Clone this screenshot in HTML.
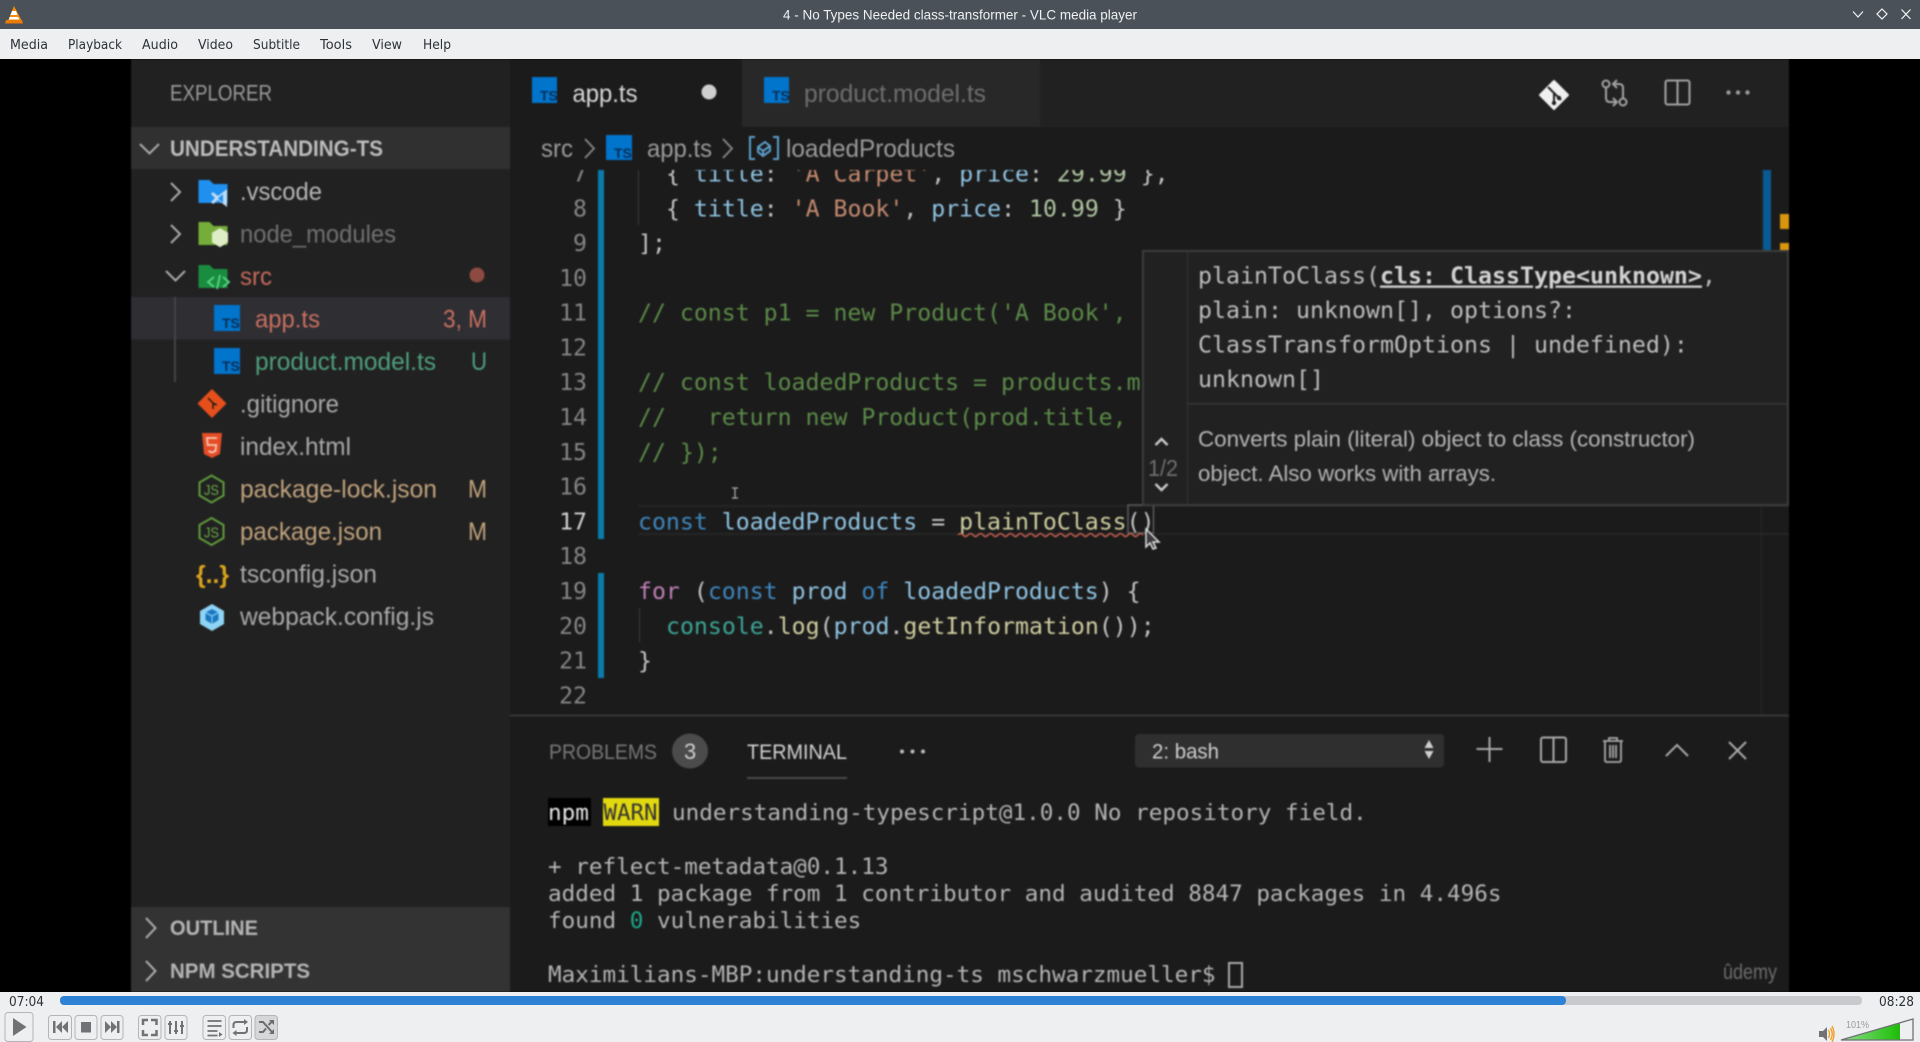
<!DOCTYPE html>
<html><head><meta charset="utf-8"><title>VLC media player</title>
<style>
html,body{margin:0;padding:0;background:#000;width:1920px;height:1042px;overflow:hidden}
svg{display:block}
text{white-space:pre}
.s{font-family:"Liberation Sans",sans-serif}
.ui{font-family:"DejaVu Sans","Liberation Sans",sans-serif;font-size:13px;fill:#2c3239}
.m{font-family:"DejaVu Sans Mono","Liberation Mono",monospace;font-size:23.2px;fill:#c4c4c4}
.t{font-family:"DejaVu Sans Mono","Liberation Mono",monospace;font-size:22.64px;fill:#b4b4b4}
.f{font-family:"Liberation Sans",sans-serif;font-size:25px}
.n{text-anchor:end;fill:#858585}
.c{fill:#5b8a48}.k{fill:#3f86bd}.v{fill:#8fc3e2}.y{fill:#cfcd9f}.r{fill:#c58a70}.g{fill:#b0c6a2}.p{fill:#bd7fb6}.q{fill:#3ba595}
.b{fill:#eeeff1;stroke:#b4b5b8;stroke-width:1}
</style></head><body>
<svg xmlns="http://www.w3.org/2000/svg" width="1920" height="1042" viewBox="0 0 1920 1042">
<defs><clipPath id="ed"><rect x="510" y="170" width="1279" height="545"/></clipPath>
<linearGradient id="vol" x1="0" x2="1" y1="0" y2="0"><stop offset="0" stop-color="#8fdc8a"/><stop offset=".85" stop-color="#2cc41a"/><stop offset="1" stop-color="#22b80e"/></linearGradient></defs>
<rect width="1920" height="1042" fill="#000"/>

<g style="filter:blur(.8px)">
<!-- editor base -->
<rect x="131" y="59" width="1658" height="933" fill="#1b1b1b"/>
<!-- sidebar -->
<rect x="131" y="59" width="379" height="933" fill="#212121"/>
<rect x="131" y="127" width="379" height="42" fill="#303030"/>
<rect x="131" y="297" width="379" height="42.5" fill="#2e2e33"/>
<rect x="131" y="907" width="379" height="85" fill="#333"/>
<rect x="174" y="297" width="2" height="85" fill="#444"/>
<text class="s" x="170" y="100.5" font-size="22" fill="#9a9a9a" textLength="102" lengthAdjust="spacingAndGlyphs">EXPLORER</text>
<path d="M140 144l9.500 9.500 9.500-9.500" fill="none" stroke="#aaa" stroke-width="2"/>
<text class="s" x="170" y="156" font-size="22" font-weight="700" fill="#bcbcbc" textLength="213" lengthAdjust="spacingAndGlyphs">UNDERSTANDING-TS</text>

<path d="M171 183l9 9-9 9M171 225l9 9-9 9" fill="none" stroke="#aaa" stroke-width="2"/>
<path d="M166 271l9.500 9.500 9.500-9.500" fill="none" stroke="#aaa" stroke-width="2"/>

<!-- folder vscode -->
<path d="M198.500 180h11l4 4h14v19h-29z" fill="#1f8ff0"/>
<path d="M227 189l-9 7-5-4-2 2 4 4-4 4 2 2 5-4 9 7z" fill="#bcdcf5"/>
<path d="M223 194v9l-5-4.500z" fill="#1f8ff0"/>
<text class="f" x="240" y="200" fill="#b5b5b5" textLength="82" lengthAdjust="spacingAndGlyphs">.vscode</text>
<!-- folder node -->
<path d="M198.500 222h11l4 4h14v19h-29z" fill="#76ad3a"/>
<path d="M220 228l8 4.800v9.600l-8 4.800-8-4.800v-9.600z" fill="#dfedc6"/>
<text class="f" x="240" y="242.500" fill="#707070" textLength="156" lengthAdjust="spacingAndGlyphs">node_modules</text>
<!-- folder src -->
<path d="M198.500 265h11l4 4h14v5h-15l-5 14h-9z" fill="#1a8c3f"/>
<path d="M204 274h23.500v14h-29z" fill="#1a8c3f"/>
<path d="M214 277l-6 5 6 5M223 277l6 5-6 5M220 275l-3 14" fill="none" stroke="#57d685" stroke-width="1.800"/>
<text class="f" x="240" y="285" fill="#c4695c" textLength="32" lengthAdjust="spacingAndGlyphs">src</text>
<circle cx="477" cy="275" r="7.500" fill="#8d4a40"/>

<!-- ts app -->
<rect x="214" y="305" width="26" height="26" fill="#0174cc"/>
<text class="s" x="222" y="328" font-size="14" font-weight="700" fill="#0a2f55">TS</text>
<text class="f" x="255" y="327.500" fill="#c96f60" textLength="65" lengthAdjust="spacingAndGlyphs">app.ts</text>
<text class="f" x="443" y="327.500" fill="#c96f60" textLength="44" lengthAdjust="spacingAndGlyphs">3, M</text>
<rect x="214" y="348" width="26" height="26" fill="#0174cc"/>
<text class="s" x="222" y="371" font-size="14" font-weight="700" fill="#0a2f55">TS</text>
<text class="f" x="255" y="370" fill="#4e9f7d" textLength="181" lengthAdjust="spacingAndGlyphs">product.model.ts</text>
<text class="f" x="471" y="370" fill="#4e9f7d" textLength="16" lengthAdjust="spacingAndGlyphs">U</text>

<!-- gitignore -->
<path d="M212 390l13.500 13.500-13.500 13.500-13.500-13.500z" fill="#e54f1c" stroke="#e54f1c" stroke-width="1.500" stroke-linejoin="round"/>
<path d="M208 398l7 7M213 403v6M213 403l4 2" fill="none" stroke="#2a1a14" stroke-width="1.500"/>
<text class="f" x="240" y="412.500" fill="#a8a8a8" textLength="99" lengthAdjust="spacingAndGlyphs">.gitignore</text>
<!-- html -->
<path d="M202 433h20l-2 21-8 4-8-4z" fill="#e44d26"/>
<path d="M217 438h-10l.7 7h8.500l-.7 6-3.500 1.500-3.500-1.500" fill="none" stroke="#f7c8b6" stroke-width="1.800"/>
<text class="f" x="240" y="455" fill="#a8a8a8" textLength="111" lengthAdjust="spacingAndGlyphs">index.html</text>
<!-- json -->
<path d="M211.500 475.500l12 7v13l-12 7-12-7v-13z" fill="none" stroke="#5e9a3c" stroke-width="2"/>
<text class="s" x="204" y="495" font-size="15" fill="#6aa945" textLength="15" lengthAdjust="spacingAndGlyphs">JS</text>
<text class="f" x="240" y="497.500" fill="#c0a27c" textLength="197" lengthAdjust="spacingAndGlyphs">package-lock.json</text>
<text class="f" x="468" y="497.500" fill="#c0a27c" textLength="19" lengthAdjust="spacingAndGlyphs">M</text>
<path d="M211.500 518l12 7v13l-12 7-12-7v-13z" fill="none" stroke="#5e9a3c" stroke-width="2"/>
<text class="s" x="204" y="537.500" font-size="15" fill="#6aa945" textLength="15" lengthAdjust="spacingAndGlyphs">JS</text>
<text class="f" x="240" y="540" fill="#c0a27c" textLength="142" lengthAdjust="spacingAndGlyphs">package.json</text>
<text class="f" x="468" y="540" fill="#c0a27c" textLength="19" lengthAdjust="spacingAndGlyphs">M</text>
<!-- tsconfig -->
<text class="s" x="196" y="583" font-size="25" font-weight="700" fill="#dca51c" textLength="33" lengthAdjust="spacingAndGlyphs">{..}</text>
<text class="f" x="240" y="582.500" fill="#a8a8a8" textLength="137" lengthAdjust="spacingAndGlyphs">tsconfig.json</text>
<!-- webpack -->
<path d="M212 604l12 7v13l-12 7-12-7v-13z" fill="#8ed4f5"/>
<path d="M212 609l6.500 3.500v7.500l-6.500 4-6.500-4v-7.500z" fill="#1c78c0"/>
<path d="M205.500 612.500l6.500 3.500 6.500-3.500M212 616v8" fill="none" stroke="#8ed4f5" stroke-width="1"/>
<text class="f" x="240" y="625" fill="#a8a8a8" textLength="194" lengthAdjust="spacingAndGlyphs">webpack.config.js</text>

<path d="M146 918l9.500 10-9.500 10M146 961l9.500 10-9.500 10" fill="none" stroke="#aaa" stroke-width="2"/>
<text class="s" x="170" y="935" font-size="21" font-weight="700" fill="#b4b4b4" textLength="88" lengthAdjust="spacingAndGlyphs">OUTLINE</text>
<text class="s" x="170" y="978" font-size="21" font-weight="700" fill="#b4b4b4" textLength="140" lengthAdjust="spacingAndGlyphs">NPM SCRIPTS</text>

<!-- tabs -->
<rect x="510" y="59" width="1279" height="68" fill="#212121"/>
<rect x="510" y="59" width="232" height="68" fill="#1b1b1b"/>
<rect x="742" y="59" width="298" height="68" fill="#282828"/>
<rect x="532" y="77" width="25" height="26" fill="#0174cc"/>
<text class="s" x="540" y="100.500" font-size="14" font-weight="700" fill="#0a2f55">TS</text>
<text class="f" x="572.500" y="102" fill="#d8d8d8" textLength="65" lengthAdjust="spacingAndGlyphs">app.ts</text>
<circle cx="709" cy="92" r="7.500" fill="#cfcfcf"/>
<rect x="764" y="77" width="25" height="26" fill="#0174cc"/>
<text class="s" x="772" y="100.500" font-size="14" font-weight="700" fill="#0a2f55">TS</text>
<text class="f" x="804" y="102" fill="#6e6e6e" textLength="182" lengthAdjust="spacingAndGlyphs">product.model.ts</text>

<!-- top right icons -->
<path d="M1554 81l14 14-14 14-14-14z" fill="#f0f0f0" stroke="#f0f0f0" stroke-width="2" stroke-linejoin="round"/>
<path d="M1548 87l10 10M1554 93v10M1558 97l3 3" fill="none" stroke="#1f1f1f" stroke-width="2"/>
<circle cx="1554" cy="103" r="2.200" fill="#1f1f1f"/><circle cx="1559" cy="98" r="2.200" fill="#1f1f1f"/>
<g fill="none" stroke="#a2a2a2" stroke-width="2">
<circle cx="1606" cy="84" r="3.500"/><circle cx="1623" cy="102" r="3.500"/>
<path d="M1606 88v10q0 4 4 4h7M1613 98l4 4-4 4M1623 98v-10q0-4-4-4h-6M1617 80l-4 4 4 4"/>
<rect x="1665.500" y="80.500" width="24" height="24" rx="2"/><path d="M1677.500 80v25"/>
</g>
<g fill="#9a9a9a"><circle cx="1728.500" cy="92.500" r="2.200"/><circle cx="1738" cy="92.500" r="2.200"/><circle cx="1747.500" cy="92.500" r="2.200"/></g>

<!-- breadcrumb -->
<rect x="510" y="127" width="1279" height="42" fill="#1b1b1b"/>
<text class="f" x="541" y="157" fill="#9a9a9a" textLength="32" lengthAdjust="spacingAndGlyphs">src</text>
<path d="M585 139l9 9.500-9 9.500M723 139l9 9.500-9 9.500" fill="none" stroke="#888" stroke-width="1.800"/>
<rect x="606" y="135" width="26" height="25" fill="#0174cc"/>
<text class="s" x="614" y="158" font-size="14" font-weight="700" fill="#0a2f55">TS</text>
<text class="f" x="647" y="157" fill="#9a9a9a" textLength="65" lengthAdjust="spacingAndGlyphs">app.ts</text>
<g fill="none" stroke="#5a9fcb" stroke-width="2">
<path d="M755 137h-5v22h5M773 137h5v22h-5"/>
<path d="M758 147l7-5 5 4v5l-7 5-5-4zM758 147l5 4 7-5M763 151v5"/>
</g>
<text class="f" x="786" y="157" fill="#9a9a9a" textLength="169" lengthAdjust="spacingAndGlyphs">loadedProducts</text>

<!-- editor -->
<g clip-path="url(#ed)">
<rect x="598" y="170" width="6" height="369" fill="#0a7bab"/>
<rect x="598" y="573" width="6" height="105" fill="#0a7bab"/>
<rect x="638" y="170" width="1" height="55" fill="#3a3a3a"/>
<rect x="639" y="608" width="1" height="34" fill="#3a3a3a"/>
<rect x="638" y="505" width="1151" height="2" fill="#252525"/>
<rect x="638" y="533" width="1151" height="2" fill="#252525"/>
<rect x="1761" y="170" width="1" height="545" fill="#262626"/>
<rect x="1763" y="170" width="8" height="80" fill="#0a5a94"/>
<rect x="1780" y="214" width="9" height="15" fill="#d8950e"/>
<rect x="1780" y="243" width="9" height="7" fill="#d8950e"/>

<g class="m">
<text class="m n" x="587" y="181.500">7</text>
<text class="m n" x="587" y="216.300">8</text>
<text class="m n" x="587" y="251">9</text>
<text class="m n" x="587" y="285.800">10</text>
<text class="m n" x="587" y="320.600">11</text>
<text class="m n" x="587" y="355.400">12</text>
<text class="m n" x="587" y="390.200">13</text>
<text class="m n" x="587" y="425">14</text>
<text class="m n" x="587" y="459.800">15</text>
<text class="m n" x="587" y="494.600">16</text>
<text class="m n" x="587" y="529.400" style="fill:#d0d0d0">17</text>
<text class="m n" x="587" y="564.200">18</text>
<text class="m n" x="587" y="599">19</text>
<text class="m n" x="587" y="633.800">20</text>
<text class="m n" x="587" y="668.600">21</text>
<text class="m n" x="587" y="703.400">22</text>

<text class="m" x="666" y="181.500">{ <tspan class="v">title</tspan>: <tspan class="r">'A Carpet'</tspan>, <tspan class="v">price</tspan>: <tspan class="g">29.99</tspan> },</text>
<text class="m" x="666" y="216.300">{ <tspan class="v">title</tspan>: <tspan class="r">'A Book'</tspan>, <tspan class="v">price</tspan>: <tspan class="g">10.99</tspan> }</text>
<text class="m" x="638" y="251">];</text>
<text class="m c" x="638" y="320.600">// const p1 = new Product('A Book', 10.99);</text>
<text class="m c" x="638" y="390.200">// const loadedProducts = products.map(prod =&gt; {</text>
<text class="m c" x="638" y="425">//   return new Product(prod.title, prod.price);</text>
<text class="m c" x="638" y="459.800">// });</text>
<text class="m" x="638" y="529.400"><tspan class="k">const</tspan> <tspan class="v">loadedProducts</tspan> = <tspan class="y">plainToClass</tspan>()</text>
<text class="m" x="638" y="599"><tspan class="p">for</tspan> (<tspan class="k">const</tspan> <tspan class="v">prod</tspan> <tspan class="k">of</tspan> <tspan class="v">loadedProducts</tspan>) {</text>
<text class="m" x="666" y="633.800"><tspan class="q">console</tspan>.<tspan class="y">log</tspan>(<tspan class="v">prod</tspan>.<tspan class="y">getInformation</tspan>());</text>
<text class="m" x="638" y="668.600">}</text>
</g>
<rect x="1128" y="505" width="25.500" height="28" fill="none" stroke="#5a5a5a" stroke-width="1.500"/>
<path d="M958 535q2.500-3 5 0t5 0 5 0 5 0 5 0 5 0 5 0 5 0 5 0 5 0 5 0 5 0 5 0 5 0 5 0 5 0 5 0 5 0 5 0 5 0 5 0 5 0 5 0 5 0 5 0 5 0 5 0 5 0 5 0 5 0 5 0 5 0 5 0 5 0 5 0 5 0 5 0" fill="none" stroke="#c9604f" stroke-width="1.500"/>
</g>

<!-- tooltip -->
<rect x="1143" y="251" width="645" height="254" fill="#212121" stroke="#3c3c3c" stroke-width="2"/>
<rect x="1187" y="251" width="1" height="254" fill="#333"/>
<rect x="1187" y="403" width="601" height="1.500" fill="#363636"/>
<text class="m" x="1198" y="283.500" style="fill:#bdbdbd;font-size:23.26px">plainToClass(<tspan font-weight="700" text-decoration="underline" style="fill:#d2d2d2">cls: ClassType&lt;unknown&gt;</tspan>,</text>
<text class="m" x="1198" y="318" style="fill:#bdbdbd;font-size:23.26px">plain: unknown[], options?:</text>
<text class="m" x="1198" y="352.500" style="fill:#bdbdbd;font-size:23.26px">ClassTransformOptions | undefined):</text>
<text class="m" x="1198" y="387" style="fill:#bdbdbd;font-size:23.26px">unknown[]</text>
<text class="s" x="1198" y="446.500" font-size="22.500" fill="#b4b4b4" textLength="497" lengthAdjust="spacingAndGlyphs">Converts plain (literal) object to class (constructor)</text>
<text class="s" x="1198" y="481" font-size="22.500" fill="#b4b4b4" textLength="298" lengthAdjust="spacingAndGlyphs">object. Also works with arrays.</text>
<path d="M1155.500 445l6-6 6 6M1155.500 484l6 6 6-6" fill="none" stroke="#c8c8c8" stroke-width="2.500"/>
<text class="s" x="1148" y="476" font-size="23" fill="#6f6f6f" textLength="30" lengthAdjust="spacingAndGlyphs">1/2</text>

<!-- cursors -->
<path d="M732 488h6M732 498h6M735 488v10" stroke="#b0b0b0" stroke-width="1.200" fill="none"/>
<path d="M1146 529v18l4-4 3 6 3-1-3-6 6 0z" fill="#3a3a3a" stroke="#e0e0e0" stroke-width="1.500"/>

<!-- panel -->
<rect x="510" y="714.500" width="1279" height="2" fill="#363636"/>
<text class="s" x="549" y="759" font-size="21.500" fill="#777" textLength="108" lengthAdjust="spacingAndGlyphs">PROBLEMS</text>
<ellipse cx="690" cy="751" rx="18" ry="17.500" fill="#4b4b4b"/>
<text class="s" x="684" y="759" font-size="22" fill="#cfcfcf">3</text>
<text class="s" x="747" y="759" font-size="21.500" fill="#d2d2d2" textLength="100" lengthAdjust="spacingAndGlyphs">TERMINAL</text>
<rect x="747" y="777" width="100" height="2" fill="#4a4a4a"/>
<g fill="#bdbdbd"><circle cx="902" cy="751.500" r="2"/><circle cx="912.500" cy="751.500" r="2"/><circle cx="923" cy="751.500" r="2"/></g>
<rect x="1135" y="734" width="309" height="33.500" rx="4" fill="#2f2f2f"/>
<text class="s" x="1152" y="758.500" font-size="21" fill="#cfcfcf" textLength="67" lengthAdjust="spacingAndGlyphs">2: bash</text>
<path d="M1429 740l4.500 8h-9zM1429 759l4.500-8h-9z" fill="#d0d0d0"/>
<g fill="none" stroke="#a8a8a8" stroke-width="2">
<path d="M1476.500 749h26M1489.500 737v25"/>
<rect x="1541" y="737.500" width="25" height="24.500" rx="2"/><path d="M1553.500 737v25"/>
<path d="M1603 741h20M1605 741v19q0 2 2 2h12q2 0 2-2v-19M1609 741v-3h8v3M1610 745v13M1613 745v13M1616 745v13" stroke-width="1.800"/>
<path d="M1666 756l11-11 11 11"/>
<path d="M1729 742l17 17M1746 742l-17 17"/>
</g>

<!-- terminal -->
<rect x="548" y="798" width="43" height="28" fill="#000"/>
<rect x="603" y="798" width="56" height="28" fill="#e2d80f"/>
<text class="t" x="548" y="820" style="fill:#e6e6e6">npm</text>
<text class="t" x="603.500" y="820" style="fill:#333;font-size:22.4px">WARN</text>
<text class="t" x="672" y="820">understanding-typescript@1.0.0 No repository field.</text>
<text class="t" x="548" y="874">+ reflect-metadata@0.1.13</text>
<text class="t" x="548" y="901">added 1 package from 1 contributor and audited 8847 packages in 4.496s</text>
<text class="t" x="548" y="928">found <tspan style="fill:#1ea88a">0</tspan> vulnerabilities</text>
<text class="t" x="548" y="982">Maximilians-MBP:understanding-ts mschwarzmueller$</text>
<rect x="1229" y="963" width="13" height="24" fill="none" stroke="#a8a8a8" stroke-width="2"/>
<text class="s" x="1723" y="979" font-size="21" fill="#6c6c6c" textLength="54" lengthAdjust="spacingAndGlyphs">ûdemy</text>
</g>

<!-- title bar -->
<rect width="1920" height="29" fill="#4a5159"/>
<path d="M14 6l-7 17h16z" fill="#f58a0b"/>
<path d="M12 11h4l1.500 4h-7zM9.800 17h8.400l1 2.500h-10.400z" fill="#fff"/>
<path d="M6 20h16l1 3.500h-18z" fill="#e97c05"/>
<text class="s" x="783" y="19.500" font-size="14" fill="#eef0f2" textLength="354" lengthAdjust="spacingAndGlyphs">4 - No Types Needed class-transformer - VLC media player</text>
<g fill="none" stroke="#f2f3f4" stroke-width="1.200">
<path d="M1853 11.500l5 5.500 5-5.500"/>
<path d="M1882 9l5 5-5 5-5-5z"/>
<path d="M1901.500 9.500l9 9.500M1910.500 9.500l-9 9.500"/>
</g>

<!-- menu -->
<rect y="29" width="1920" height="30" fill="#eeeff1"/>
<text class="ui" x="10" y="49" textLength="38" lengthAdjust="spacingAndGlyphs">Media</text>
<text class="ui" x="68" y="49" textLength="54" lengthAdjust="spacingAndGlyphs">Playback</text>
<text class="ui" x="142" y="49" textLength="36" lengthAdjust="spacingAndGlyphs">Audio</text>
<text class="ui" x="198" y="49" textLength="35" lengthAdjust="spacingAndGlyphs">Video</text>
<text class="ui" x="253" y="49" textLength="47" lengthAdjust="spacingAndGlyphs">Subtitle</text>
<text class="ui" x="320" y="49" textLength="32" lengthAdjust="spacingAndGlyphs">Tools</text>
<text class="ui" x="372" y="49" textLength="30" lengthAdjust="spacingAndGlyphs">View</text>
<text class="ui" x="423" y="49" textLength="28" lengthAdjust="spacingAndGlyphs">Help</text>

<!-- controls -->
<rect y="992" width="1920" height="50" fill="#eeeff1"/>
<text class="ui" x="9" y="1006" textLength="35" lengthAdjust="spacingAndGlyphs" style="font-size:13.5px">07:04</text>
<text class="ui" x="1879" y="1006" textLength="35" lengthAdjust="spacingAndGlyphs" style="font-size:13.5px">08:28</text>
<rect x="60" y="996" width="1802" height="9" rx="4" fill="#c9cacd"/>
<rect x="60" y="996" width="1506" height="9" rx="4" fill="#2e82d6"/>

<rect class="b" x="5" y="1012.500" width="28" height="29" rx="3"/>
<path d="M13 1018l13.500 9-13.500 9z" fill="#707276"/>
<rect class="b" x="48.500" y="1015.500" width="23" height="24" rx="3"/>
<path d="M53 1021h2.500v12h-2.500zM56 1027l6-6v12zM62 1027l6-6v12z" fill="#707276"/>
<rect class="b" x="75" y="1015.500" width="22" height="24" rx="3"/>
<rect x="81" y="1022" width="10" height="10.500" fill="#707276"/>
<rect class="b" x="101" y="1015.500" width="22" height="24" rx="3"/>
<path d="M105 1021l6 6-6 6zM111 1021l6 6-6 6zM117 1021h2.500v12h-2.500z" fill="#707276"/>
<rect class="b" x="138.500" y="1015.500" width="22.500" height="24" rx="3"/>
<path d="M143 1025v-5h5M151 1020h5.500v5M156.500 1030v5h-5.500M148 1035h-5v-5" fill="none" stroke="#707276" stroke-width="2.500"/>
<rect class="b" x="165" y="1015.500" width="22" height="24" rx="3"/>
<path d="M170 1021v13M176 1021v13M182 1021v13" stroke="#707276" stroke-width="2" fill="none"/>
<path d="M168 1023h4v2h-4zM174 1030h4v2h-4zM180 1025h4v2h-4z" fill="#707276"/>
<rect class="b" x="203" y="1015.500" width="22.500" height="24" rx="3"/>
<path d="M207.500 1021h14M207.500 1026h14M207.500 1031h10M207.500 1035.500h10" stroke="#707276" stroke-width="1.800" fill="none"/>
<path d="M219 1032l3.500 2.500-3.500 2.500z" fill="#707276"/>
<rect class="b" x="229" y="1015.500" width="22.500" height="24" rx="3"/>
<path d="M233.500 1028v-3q0-3 3-3h10M247 1027v3q0 3-3 3h-10" fill="none" stroke="#707276" stroke-width="2"/>
<path d="M244 1019l4 3-4 3zM236.500 1030l-4 3 4 3z" fill="#707276"/>
<rect x="255" y="1015.500" width="22.500" height="24" rx="3" fill="#d6d7d9" stroke="#b4b5b8"/>
<path d="M259 1022h4l9 10M259 1032h4l3-3.500M268.500 1025l3-3" fill="none" stroke="#6a6c70" stroke-width="2"/>
<path d="M269 1020l5 0v5zM269 1034l5 0v-5z" fill="#6a6c70"/>

<!-- volume -->
<path d="M1819 1031h4l4-4v14l-4-4h-4z" fill="#707276"/>
<path d="M1828.500 1030q2 4 0 8M1830.500 1028q3.500 6 0 12M1832 1026q4 8 0 16" fill="none" stroke="#f19a1c" stroke-width="1.300"/>
<path d="M1841 1040l59-17v17z" fill="url(#vol)"/>
<path d="M1841 1040h72v-21z" fill="none" stroke="#707276" stroke-width="1.300"/>
<text class="s" x="1846" y="1028" font-size="10.500" fill="#9a9a9a" textLength="23" lengthAdjust="spacingAndGlyphs">101%</text>
</svg>
</body></html>
